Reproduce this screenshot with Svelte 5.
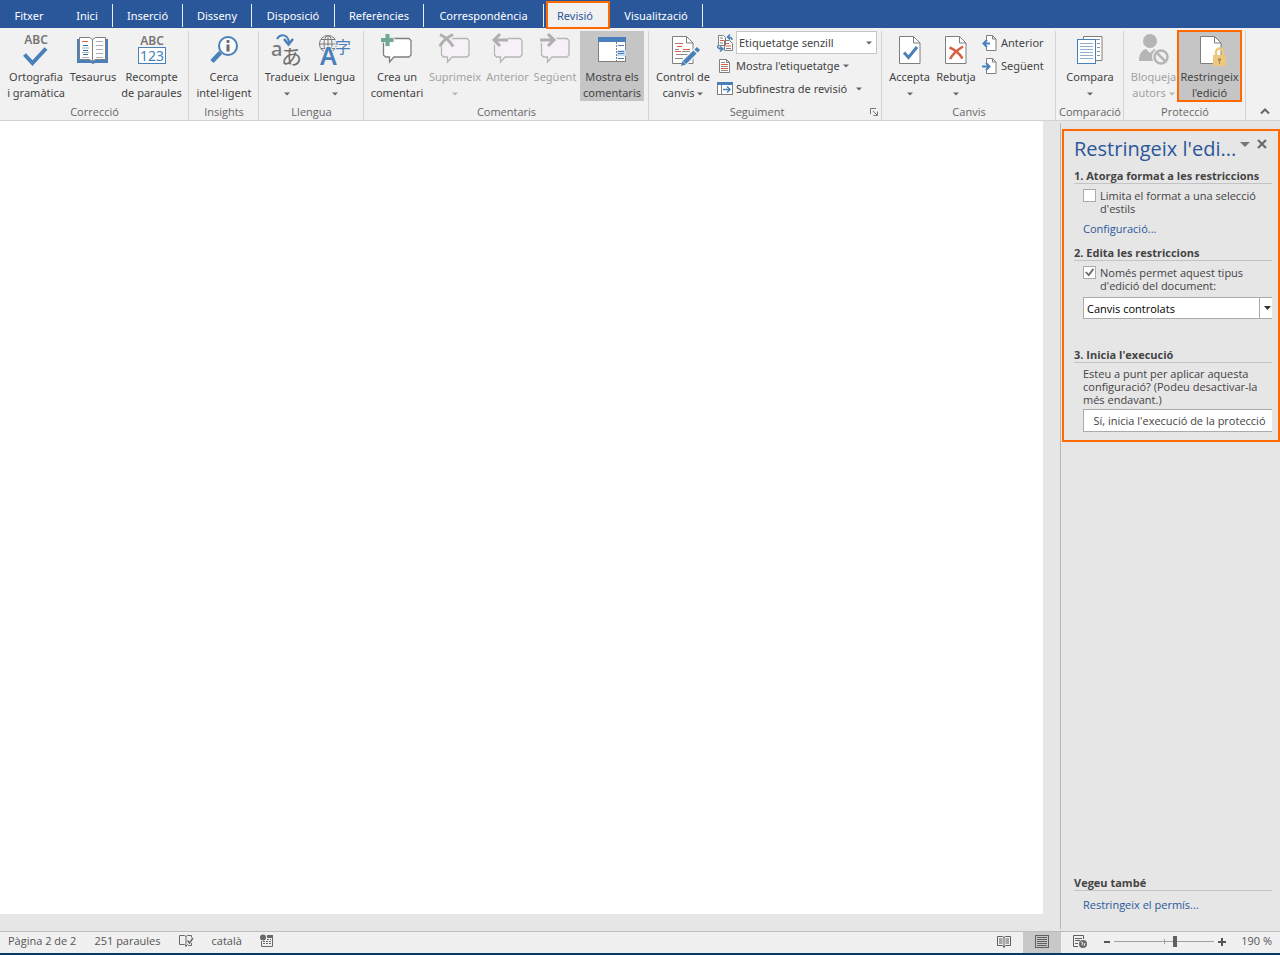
<script>
  const tabs = [
    { label: 'Fitxer', width: 62, kind: 'file' },
    { label: 'Inici', width: 51, kind: 'ruled' },
    { label: 'Inserció', width: 70, kind: 'ruled' },
    { label: 'Disseny', width: 69, kind: 'ruled' },
    { label: 'Disposició', width: 83, kind: 'ruled' },
    { label: 'Referències', width: 89, kind: 'ruled' },
    { label: 'Correspondència', width: 120, kind: 'ruled' },
    { label: 'Revisió', width: 64, kind: 'active' },
    { label: 'Visualització', width: 93, kind: 'ruled' }
  ];

  const groups = [
    {
      name: 'Correcció',
      buttons: [
        { icon: 'spelling', lines: ['Ortografia', 'i gramàtica'], width: 62 },
        { icon: 'book', lines: ['Tesaurus'], width: 52 },
        { icon: 'count', lines: ['Recompte', 'de paraules'], width: 65 }
      ]
    },
    { name: 'Insights', buttons: [{ icon: 'lookup', lines: ['Cerca', 'intel·ligent'], width: 60 }] },
    {
      name: 'Llengua',
      buttons: [
        { icon: 'translate', lines: ['Tradueix'], menu: true, width: 46 },
        { icon: 'language', lines: ['Llengua'], menu: true, width: 49 }
      ]
    },
    {
      name: 'Comentaris',
      buttons: [
        { icon: 'newComment', lines: ['Crea un', 'comentari'], width: 56 },
        { icon: 'deleteComment', lines: ['Suprimeix'], menu: true, disabled: true, width: 60 },
        { icon: 'prevComment', lines: ['Anterior'], disabled: true, width: 45 },
        { icon: 'nextComment', lines: ['Següent'], disabled: true, width: 50 },
        { icon: 'showComments', lines: ['Mostra els', 'comentaris'], pressed: true, width: 64 }
      ]
    },
    {
      name: 'Seguiment',
      launcher: true,
      stack: 'tracking',
      buttons: [{ icon: 'track', lines: ['Control de', 'canvis'], inlineMenu: true, width: 58 }]
    },
    {
      name: 'Canvis',
      stack: 'changes',
      buttons: [
        { icon: 'accept', lines: ['Accepta'], menu: true, width: 45 },
        { icon: 'reject', lines: ['Rebutja'], menu: true, width: 48 }
      ]
    },
    { name: 'Comparació', buttons: [{ icon: 'compare', lines: ['Compara'], menu: true, width: 58 }] },
    {
      name: 'Protecció',
      buttons: [
        { icon: 'block', lines: ['Bloqueja', 'autors'], inlineMenu: true, disabled: true, width: 49 },
        { icon: 'restrict', lines: ['Restringeix', "l'edició"], pressed: true, marked: true, width: 63 }
      ]
    }
  ];

  let limitFormat = $state(false);
  let limitEditing = $state(true);
  let zoom = $state(61);
</script>

{#snippet caret()}
  <svg class="caret" width="6" height="4" viewBox="0 0 6 4" aria-hidden="true"><path d="M0 0.5h6l-3 3z" fill="currentColor" /></svg>
{/snippet}

{#snippet page(x)}
  <path d="M{x} 4.5h14l6.5 6.5v20.500h-20.500z" fill="#fff" stroke="#7f7f7f" />
  <path d="M{x + 14} 4.500v6.500h6.500" fill="none" stroke="#7f7f7f" />
{/snippet}

{#snippet bubble(fill, stroke)}
  <path d="M6.500 6.500h23.500l2 2v14.500l-2 2h-15l-4.500 5v-5h-4l-2-2v-14.500z" {fill} {stroke} stroke-width="1.300" />
{/snippet}

{#snippet bigIcon(name)}
  <svg class="big-icon" width="36" height="34" viewBox="0 0 36 34" aria-hidden="true">
    {#if name === 'spelling'}
      <text class="abc" x="18" y="12" text-anchor="middle">ABC</text>
      <path d="M6.500 22.500l8 8.500L28 16.500" fill="none" stroke="#4a80b9" stroke-width="4" />
    {:else if name === 'book'}
      <path d="M2 7h31v24H20l-2 1-2-1H2z" fill="#4a80b9" />
      <path d="M4.500 5.500h10l3 2 3-2h10v22h-10l-3 2-3-2h-10z" fill="#fff" stroke="#7f7f7f" />
      <path d="M17.500 7.500v22" stroke="#7f7f7f" />
      <path d="M7 9.500h6" stroke="#d8603f" />
      <path d="M8 13.500h5M8 18.500h5M8 22.500h5" stroke="#2f6db5" />
      <path d="M7 16h7M7 20.500h7M7 25.500h7M21 9.500h7M21 13.500h7M21 17.500h7M21 21.500h7M21 25.500h7" stroke="#b0b0b0" />
    {:else if name === 'count'}
      <text class="abc" x="18" y="13" text-anchor="middle">ABC</text>
      <rect x="4.500" y="15.500" width="27" height="16" fill="#fff" stroke="#4a80b9" />
      <text class="digits" x="18" y="29" text-anchor="middle">123</text>
    {:else if name === 'lookup'}
      <path d="M14.500 20.500L6 29.500" stroke="#4a80b9" stroke-width="4.500" />
      <circle cx="22" cy="14" r="9" fill="#fafafa" stroke="#4a80b9" stroke-width="2" />
      <rect x="20.500" y="8" width="3" height="3" rx="1" fill="#6a6a6a" />
      <path d="M20.500 12.500h3v7h-3z" fill="#6a6a6a" />
    {:else if name === 'translate'}
      <text x="2" y="24" font-size="20" font-weight="500" fill="#7a7a7a">a</text>
      <text class="cjk" x="12" y="32" font-size="21" fill="#6f6f6f">あ</text>
      <path d="M8 7c3-5 11-6 12 4" fill="none" stroke="#4a80b9" stroke-width="2" />
      <path d="M15 7l4.500 5.500L24 7" fill="none" stroke="#4a80b9" stroke-width="2.500" />
    {:else if name === 'language'}
      <g fill="none" stroke="#7a7a7a">
        <circle cx="11" cy="12" r="8.500" />
        <ellipse cx="11" cy="12" rx="4" ry="8.500" />
        <path d="M11 3.500v17M2.500 12h17M4 7.500h14M4 16.500h14" />
      </g>
      <text x="3" y="33" font-size="25" font-weight="600" fill="#4a80b9" stroke="#f1f1f1" stroke-width="2" paint-order="stroke">A</text>
      <text class="cjk" x="18" y="21" font-size="16" fill="#4a80b9" stroke="#f1f1f1" stroke-width="2" paint-order="stroke">字</text>
    {:else if name === 'newComment'}
      {@render bubble('#fff', '#7f7f7f')}
      <path d="M6 1h5v4.500h4.500v5H11v4.500H6v-4.500H1.500v-5H6z" fill="#f1f1f1" />
      <path d="M6.500 2h4v4h4v4h-4v4h-4v-4h-4.500v-4h4.500z" fill="#6fa894" />
    {:else if name === 'deleteComment'}
      {@render bubble('#f6f1f7', '#b5b5b5')}
      <path d="M3 2.500C8 5 13 9 16 14.500M16 2.500C11 5 5 9 3 14.500" fill="none" stroke="#f1f1f1" stroke-width="6" />
      <path d="M3 2.500C8 5 13 9 16 14.500M16 2.500C11 5 5 9 3 14.500" fill="none" stroke="#afafaf" stroke-width="3" />
    {:else if name === 'prevComment'}
      {@render bubble('#f6f1f7', '#b5b5b5')}
      <path d="M4 8h14M10 2L4 8l6 6" fill="none" stroke="#f1f1f1" stroke-width="6" />
      <path d="M5 8h13M10 2L4 8l6 6" fill="none" stroke="#afafaf" stroke-width="3" />
    {:else if name === 'nextComment'}
      {@render bubble('#f6f1f7', '#b5b5b5')}
      <path d="M3 8h14M11 2l6 6-6 6" fill="none" stroke="#f1f1f1" stroke-width="6" />
      <path d="M3 8h13M11 2l6 6-6 6" fill="none" stroke="#afafaf" stroke-width="3" />
    {:else if name === 'showComments'}
      <rect x="4.500" y="5.500" width="27" height="24" fill="#fff" stroke="#7f7f7f" />
      <path d="M4 5h28v5H4z" fill="#4a80b9" />
      <path d="M23 18h9v6h-9z" fill="#c5dcf2" />
      <path d="M22.500 10v20" stroke="#7f7f7f" stroke-dasharray="2 1" />
      <path d="M24 13.500h6M24 19.500h6M24 21.500h6M24 26.500h6" stroke="#4a80b9" />
    {:else if name === 'track'}
      {@render page(7.5)}
      <path d="M10 11.500h4M11 22.500h12M10 17.500h4M17 19.500h8M10 26.500h8" stroke="#8a8a8a" />
      <path d="M14 11.500h4M12 14.500h5M18 17.500h7M10 19.500h6" stroke="#d8603f" />
      <path d="M18 32L33 17" stroke="#f1f1f1" stroke-width="7" />
      <path d="M19.500 30.500L30 20M31 19l2.500-2.500" stroke="#4a80b9" stroke-width="4.500" />
      <path d="M16 34l1.500-5 3.500 3.500z" fill="#4a80b9" />
    {:else if name === 'accept'}
      {@render page(7.5)}
      <path d="M12 20.500l4.500 5L25 15" fill="none" stroke="#4a80b9" stroke-width="3" />
    {:else if name === 'reject'}
      {@render page(7.5)}
      <path d="M11.500 15.500c5 2 10 6 13 11M25 14.500c-5 3-10 7-13 12.500" fill="none" stroke="#d8603f" stroke-width="2.500" />
    {:else if name === 'compare'}
      <path d="M11.500 4.500h18.500v24h-18.500z" fill="#fff" stroke="#7f7f7f" />
      <path d="M24 7.500h4M25 11.500h3M25 15.500h3M25 19.500h3M25 23.500h3" fill="none" stroke="#8f8f8f" />
      <rect x="5.500" y="7.500" width="18" height="24" fill="#fff" stroke="#4a80b9" />
      <path d="M8 11.500h13M8 14.500h13M8 17.500h13M8 20.500h13M8 23.500h13M8 26.500h13" stroke="#8fb0d3" />
    {:else if name === 'block'}
      <circle cx="14" cy="9" r="7" fill="#b5b5b5" />
      <path d="M3 29c0-7 3-11 7-12l4 4 4-4c4 1 6 4 7 12z" fill="#b5b5b5" />
      <circle cx="25" cy="25" r="9" fill="#f1f1f1" />
      <circle cx="25" cy="25" r="6.500" fill="none" stroke="#b5b5b5" stroke-width="2.500" />
      <path d="M20.500 20.500l9 9" stroke="#b5b5b5" stroke-width="2.500" />
    {:else}
      {@render page(8.5)}
      <path d="M24 24v-4a3.500 3.500 0 0 1 7 0v4" fill="none" stroke="#edc77c" stroke-width="2.500" />
      <rect x="21" y="23" width="13" height="11" fill="#edc77c" />
      <path d="M26 26.500h3v2l-1 .5v3h-1v-3l-1-.5z" fill="#a38a58" />
    {/if}
  </svg>
{/snippet}

{#snippet smallPage(arrow)}
  <svg width="16" height="18" viewBox="0 0 16 18" aria-hidden="true">
    <path d="M4.500 6V1.500h6l3.500 3.500v11.500H4.500V13M10.500 1.500V5H14" fill="#fff" stroke="#7f7f7f" />
    {#if arrow === 'left'}
      <path d="M1.500 9.500H8M5 6L1.500 9.500 5 13" fill="none" stroke="#4a80b9" stroke-width="2" />
    {:else}
      <path d="M0 9.500h7M4 6l3.500 3.500L4 13" fill="none" stroke="#4a80b9" stroke-width="2" />
    {/if}
  </svg>
{/snippet}

<div class="app">
  <nav class="tabs" aria-label="Pestanyes">
    {#each tabs as tab}
      <button class="tab {tab.kind}" style:width="{tab.width}px">{tab.label}</button>
    {/each}
  </nav>

  <div class="ribbon">
    {#each groups as group}
      <section class="group" aria-label={group.name}>
        <div class="tools">
          {#each group.buttons as b}
            <button
              class="big"
              class:pressed={b.pressed}
              class:marked={b.marked}
              disabled={b.disabled}
              style:width="{b.width}px"
            >
              {@render bigIcon(b.icon)}
              {#each b.lines as line, i}
                <span class="line">{line}{#if b.inlineMenu && i === b.lines.length - 1}&nbsp;{@render caret()}{/if}</span>
              {/each}
              {#if b.menu}<span class="line">{@render caret()}</span>{/if}
            </button>
          {/each}

          {#if group.stack === 'tracking'}
            <div class="stack tracking">
              <div class="row">
                <svg width="16" height="18" viewBox="0 0 16 18" aria-hidden="true">
                  <path d="M1.500 1.500h5l2 2v8h-7zM7.500 6.500h5l3 3v7h-8z" fill="#fff" stroke="#7f7f7f" />
                  <path d="M3 4h3M3 9h3M9 14.500h5" stroke="#7f7f7f" />
                  <path d="M3 6.500h4M9 9.500h3M9 12h5" stroke="#d8603f" />
                  <path d="M15 6c0-2-1-3-4-3M13 0.500L10.500 3 13 5.500M0.500 11.500c0 2 1 3.500 4.500 3.500M3 12.500L6 15l-3 2.500" fill="none" stroke="#4a80b9" stroke-width="1.500" />
                </svg>
                <span class="combo">
                  <select aria-label="Mostra per a revisió"><option>Etiquetatge senzill</option></select>
                  {@render caret()}
                </span>
              </div>
              <button class="row">
                <svg width="16" height="18" viewBox="0 0 16 18" aria-hidden="true">
                  <path d="M2.500 2.500h7l3 3v10h-10zM9.500 2.500v3h3" fill="#fff" stroke="#7f7f7f" />
                  <path d="M4 5.500h4M4 9.500h7M4 13.500h7" stroke="#8f8f8f" />
                  <path d="M4 7.500h7M4 11.500h7" stroke="#d8603f" />
                </svg>
                <span>Mostra l'etiquetatge</span>{@render caret()}
              </button>
              <button class="row">
                <svg width="16" height="18" viewBox="0 0 16 18" aria-hidden="true">
                  <rect x="0.500" y="2.500" width="15" height="12" fill="#fff" stroke="#7f7f7f" />
                  <path d="M0 2h16v3H0z" fill="#4a80b9" />
                  <path d="M4.500 5v9" stroke="#7f7f7f" />
                  <path d="M6 9.500h7M10 6.500l3 3-3 3" fill="none" stroke="#4a80b9" stroke-width="1.500" />
                </svg>
                <span class="wide">Subfinestra de revisió</span>{@render caret()}
              </button>
            </div>
          {:else if group.stack === 'changes'}
            <div class="stack changes">
              <button class="row">{@render smallPage('left')}<span>Anterior</span></button>
              <button class="row">{@render smallPage('right')}<span>Següent</span></button>
            </div>
          {/if}
        </div>
        <div class="group-name" class:with-launcher={group.launcher}>
          {group.name}
          {#if group.launcher}
            <button class="launcher" aria-label="Opcions de seguiment">
              <svg width="8" height="8" viewBox="0 0 8 8" aria-hidden="true">
                <path d="M0.500 6V0.500H6M3 3l4 4M7.500 3.500v4h-4" fill="none" stroke="#777" />
              </svg>
            </button>
          {/if}
        </div>
      </section>
    {/each}
    <button class="collapse" aria-label="Redueix la cinta">
      <svg width="10" height="7" viewBox="0 0 10 7" aria-hidden="true"><path d="M1 5.500l4-4 4 4" fill="none" stroke="#666" stroke-width="2" /></svg>
    </button>
  </div>

  <div class="workspace">
    <main class="document" aria-label="Document"></main>
    <aside class="pane">
      <div class="highlight">
        <header>
          <h1>Restringeix l'edi...</h1>
          <button aria-label="Opcions del panell"><svg width="10" height="5" viewBox="0 0 10 5" aria-hidden="true"><path d="M0 0h10L5 5z" fill="#777" /></svg></button>
          <button aria-label="Tanca"><svg width="10" height="10" viewBox="0 0 10 10" aria-hidden="true"><path d="M1 1l8 8M9 1L1 9" stroke="#6a6a6a" stroke-width="2.200" /></svg></button>
        </header>

        <section class="first">
          <h2>1. Atorga format a les restriccions</h2>
          <label class="check">
            <input type="checkbox" bind:checked={limitFormat} />
            <span>Limita el format a una selecció<br />d'estils</span>
          </label>
          <a href="#configuracio">Configuració...</a>
        </section>

        <section class="second">
          <h2>2. Edita les restriccions</h2>
          <label class="check">
            <input type="checkbox" bind:checked={limitEditing} />
            <span>Només permet aquest tipus<br />d'edició del document:</span>
          </label>
          <div class="kind">
            <select aria-label="Tipus d'edició"><option>Canvis controlats</option></select>
            <span class="arrow"><svg width="8" height="4" viewBox="0 0 8 4" aria-hidden="true"><path d="M0 0h7L3.500 4z" fill="#333" /></svg></span>
          </div>
        </section>

        <section>
          <h2>3. Inicia l'execució</h2>
          <p>Esteu a punt per aplicar aquesta<br />configuració? (Podeu desactivar-la<br />més endavant.)</p>
          <button class="start">Sí, inicia l'execució de la protecció</button>
        </section>
      </div>

      <section class="also">
        <h2>Vegeu també</h2>
        <a href="#permis">Restringeix el permís...</a>
      </section>
    </aside>
  </div>

  <footer class="status">
    <span>Pàgina 2 de 2</span>
    <span>251 paraules</span>
    <svg width="15" height="14" viewBox="0 0 15 14" aria-hidden="true">
      <path d="M7 2.500L5.500 1.500h-5v9h5L7 12l1.500-1.500M7 2.500V13M7 2.500l1.500-1h4v2M12.500 9v2.500H9" fill="none" stroke="#6a6a6a" />
      <path d="M8.500 6.500l2 2.500L14 4" fill="none" stroke="#6a6a6a" stroke-width="1.500" />
    </svg>
    <span>català</span>
    <svg width="14" height="14" viewBox="0 0 14 14" aria-hidden="true">
      <circle cx="3" cy="3.500" r="3" fill="#6a6a6a" />
      <path d="M7 1h6v3H7z" fill="#6a6a6a" />
      <path d="M1.500 7v5.500h11V3" fill="none" stroke="#6a6a6a" />
      <path d="M7 5.500h4M3 7.500h8M3 9.500h8" stroke="#6a6a6a" stroke-dasharray="2 1" />
    </svg>
    <div class="views">
      <button class="view" aria-label="Mode de lectura">
        <svg width="14" height="14" viewBox="0 0 14 14" aria-hidden="true">
          <path d="M0.500 1.500h5L7 2.500l1.500-1h5v9h-5L7 12l-1.500-1.500h-5zM7 2v11" fill="none" stroke="#5f5f5f" />
          <path d="M2 4h3.500M2 6h3.500M2 8h3.500M8.500 4H12M8.500 6H12M8.500 8H12" stroke="#5f5f5f" />
        </svg>
      </button>
      <button class="view current" aria-label="Disseny d'impressió">
        <svg width="14" height="14" viewBox="0 0 14 14" aria-hidden="true">
          <rect x="0.500" y="0.500" width="13" height="12" fill="none" stroke="#5f5f5f" />
          <path d="M2 2.500h10M2 4.500h10M2 6.500h10M2 8.500h10M2 10.500h10" stroke="#5f5f5f" />
        </svg>
      </button>
      <button class="view" aria-label="Disseny web">
        <svg width="14" height="14" viewBox="0 0 14 14" aria-hidden="true">
          <path d="M5 11.500H0.500v-11h10V4M2 3.500h7M2 5.500h5M2 8.500h3" fill="none" stroke="#5f5f5f" />
          <circle cx="10" cy="9" r="4" fill="#6a6a6a" />
          <path d="M8 7l2 1-1 2M11 11l1-3" fill="none" stroke="#f0f0f0" />
        </svg>
      </button>
      <button class="step" aria-label="Redueix"><svg width="8" height="8" viewBox="0 0 8 8" aria-hidden="true"><path d="M1 4h6" stroke="#555" stroke-width="2" /></svg></button>
      <input class="zoom" type="range" min="0" max="100" bind:value={zoom} aria-label="Zoom" />
      <button class="step" aria-label="Amplia"><svg width="8" height="8" viewBox="0 0 8 8" aria-hidden="true"><path d="M0 4h8M4 0v8" stroke="#555" stroke-width="2" /></svg></button>
      <span class="percent">190 %</span>
    </div>
  </footer>
</div>

<style>
  :global(body) {
    margin: 0;
    background: #e6e6e6;
  }

  .app {
    display: flex;
    flex-direction: column;
    min-height: 100vh;
    box-sizing: border-box;
    border-bottom: 2px solid #063a6b;
    font-family: "Open Sans", "Noto Sans", sans-serif;
    font-size: 11px;
    line-height: 16px;
    color: #444;
  }

  button,
  select {
    margin: 0;
    padding: 0;
    border: 0;
    background: none;
    font: inherit;
    color: inherit;
    white-space: nowrap;
  }

  svg {
    flex: none;
    overflow: visible;
  }

  .tabs {
    display: flex;
    height: 28px;
    background: #2a579a;
    font-family: "Noto Sans", "Open Sans", sans-serif;
  }

  .tab {
    box-sizing: border-box;
    height: 23px;
    margin-top: 4px;
    color: #fff;
  }

  .ruled {
    border-right: 1px solid #e8eef7;
  }

  .active {
    z-index: 1;
    height: 28px;
    margin: 1px 0 0 2px;
    padding: 1px 6px 0 0;
    border: 2px solid #ff6a00;
    background: #f1f1f1;
    color: #2a579a;
  }

  .file {
    padding: 1px 4px 0 0;
  }

  .ribbon {
    display: flex;
    box-sizing: border-box;
    padding: 3px 0 0;
    border-bottom: 1px solid #d2d2d2;
    background: #f1f1f1;
  }

  .group {
    position: relative;
    padding: 0 4px 0 5px;
    border-right: 1px solid #d4d4d4;
  }

  .tools {
    display: flex;
    height: 70px;
    font-family: "Noto Sans", "Open Sans", sans-serif;
  }

  .big {
    display: flex;
    flex-direction: column;
    align-items: center;
    box-sizing: border-box;
    padding-top: 1px;
  }

  .big:disabled {
    color: #a3a3a3;
  }

  .pressed {
    background: #c5c5c5;
  }

  .marked {
    outline: 2px solid #ff6a00;
    outline-offset: -1px;
  }

  .big-icon {
    margin-bottom: 3px;
  }

  .abc {
    font-size: 12px;
    font-weight: 600;
    fill: #767676;
  }

  .digits {
    font-size: 14px;
    fill: #4a80b9;
  }

  .cjk {
    font-family: "Noto Sans CJK JP", sans-serif;
  }

  .line {
    white-space: nowrap;
  }

  .caret {
    color: #666;
    vertical-align: middle;
  }

  .big:disabled .caret {
    color: #b5b5b5;
  }

  .stack {
    display: flex;
    flex-direction: column;
  }

  .changes {
    box-sizing: border-box;
    width: 71px;
    padding-left: 2px;
  }

  .tracking {
    box-sizing: border-box;
    width: 165px;
    padding-left: 5px;
  }

  .row {
    display: flex;
    align-items: center;
    gap: 3px;
    height: 23px;
  }

  .wide {
    margin-right: 6px;
  }

  .combo {
    display: flex;
    flex: 1;
    align-items: center;
    box-sizing: border-box;
    height: 23px;
    padding-right: 4px;
    border: 1px solid #c6c6c6;
    background: #fff;
  }

  .combo select,
  .kind select {
    flex: 1;
    min-width: 0;
    padding-left: 2px;
    appearance: none;
  }

  .group-name {
    margin: 0 -4px;
    padding: 3px 0 0;
    text-align: center;
    color: #666;
  }

  .with-launcher {
    padding-right: 17px;
  }

  .launcher {
    position: absolute;
    right: 3px;
    bottom: 4px;
    width: 8px;
    height: 8px;
    line-height: 0;
  }

  .collapse {
    align-self: flex-end;
    margin: 0 10px 5px auto;
    line-height: 0;
  }

  .workspace {
    display: flex;
    flex: 1;
    background: #e6e6e6;
  }

  .document {
    flex: 1;
    margin: 0 17px 17px 0;
    background: #fff;
  }

  .pane {
    display: flex;
    flex-direction: column;
    box-sizing: border-box;
    width: 220px;
    margin: 2px 0;
    padding: 6px 0 18px 1px;
    border-left: 1px solid #b8b8b8;
    line-height: 13px;
  }

  .highlight {
    padding: 4px 6px 8px 10px;
    border: 2px solid #ff6a00;
  }

  header {
    display: flex;
    align-items: flex-start;
    gap: 7px;
    margin-bottom: 7px;
    padding-right: 5px;
  }

  header button {
    display: flex;
    align-items: center;
    height: 18px;
  }

  h1 {
    flex: 1;
    min-width: 0;
    margin: 0;
    font-size: 20px;
    font-weight: 400;
    line-height: 27px;
    white-space: nowrap;
    color: #2a579a;
  }

  h2 {
    margin: 0;
    border-bottom: 1px solid #c3c3c3;
    font-size: 11px;
    font-weight: 700;
    line-height: 14px;
    white-space: nowrap;
  }

  .check {
    display: flex;
    gap: 4px;
    margin: 5px 0 0 9px;
    white-space: nowrap;
  }

  .check input {
    flex: none;
    box-sizing: border-box;
    width: 13px;
    height: 13px;
    margin: 0;
    border: 1px solid #ababab;
    background: #fff;
    appearance: none;
  }

  .check input:checked::before {
    content: "";
    display: block;
    width: 11px;
    height: 11px;
    background: #6a6a6a;
    clip-path: polygon(10% 50%, 22% 40%, 42% 62%, 80% 12%, 92% 22%, 44% 86%);
  }

  a {
    display: block;
    margin: 7px 0 0 9px;
    color: #2a579a;
    text-decoration: none;
  }

  .first {
    margin-bottom: 11px;
  }

  .second {
    margin-bottom: 29px;
  }

  .kind {
    display: flex;
    box-sizing: border-box;
    height: 22px;
    margin: 5px 0 0 9px;
    border: 1px solid #ababab;
    border-right: 0;
    background: #fff;
    color: #000;
  }

  .kind select {
    padding-left: 3px;
  }

  .arrow {
    display: flex;
    align-items: center;
    justify-content: flex-end;
    width: 12px;
    border-left: 1px solid #ababab;
  }

  p {
    margin: 4px 0 3px 9px;
    white-space: nowrap;
  }

  .start {
    display: block;
    box-sizing: border-box;
    width: 189px;
    height: 23px;
    margin-left: 9px;
    padding-left: 3px;
    border: 1px solid #ababab;
    border-right: 0;
    background: #fff;
  }

  .also {
    margin: auto 8px 0 12px;
  }

  .status {
    display: flex;
    align-items: center;
    gap: 18px;
    height: 21px;
    padding-left: 8px;
    border-top: 1px solid #bdbdbd;
    background: #f0f0f0;
    color: #555;
  }

  .status > span,
  .status > svg,
  .percent {
    margin-bottom: 3px;
  }

  .views {
    display: flex;
    align-items: center;
    align-self: stretch;
    margin-left: auto;
    padding-right: 8px;
  }

  .view,
  .step {
    display: flex;
    align-items: center;
    justify-content: center;
    align-self: stretch;
    box-sizing: border-box;
    width: 38px;
    padding-bottom: 2px;
  }

  .current {
    background: #c8c8c8;
  }

  .step {
    width: 15px;
  }

  .zoom {
    width: 100px;
    height: 12px;
    margin: 0 0 2px;
    appearance: none;
    background:
      linear-gradient(#a0a0a0, #a0a0a0) center / 1px 5px no-repeat,
      linear-gradient(#a0a0a0, #a0a0a0) center / 100% 1px no-repeat;
  }

  .zoom::-webkit-slider-thumb {
    width: 4px;
    height: 11px;
    appearance: none;
    background: #5f5f5f;
  }

  .percent {
    width: 43px;
    text-align: right;
  }
</style>
